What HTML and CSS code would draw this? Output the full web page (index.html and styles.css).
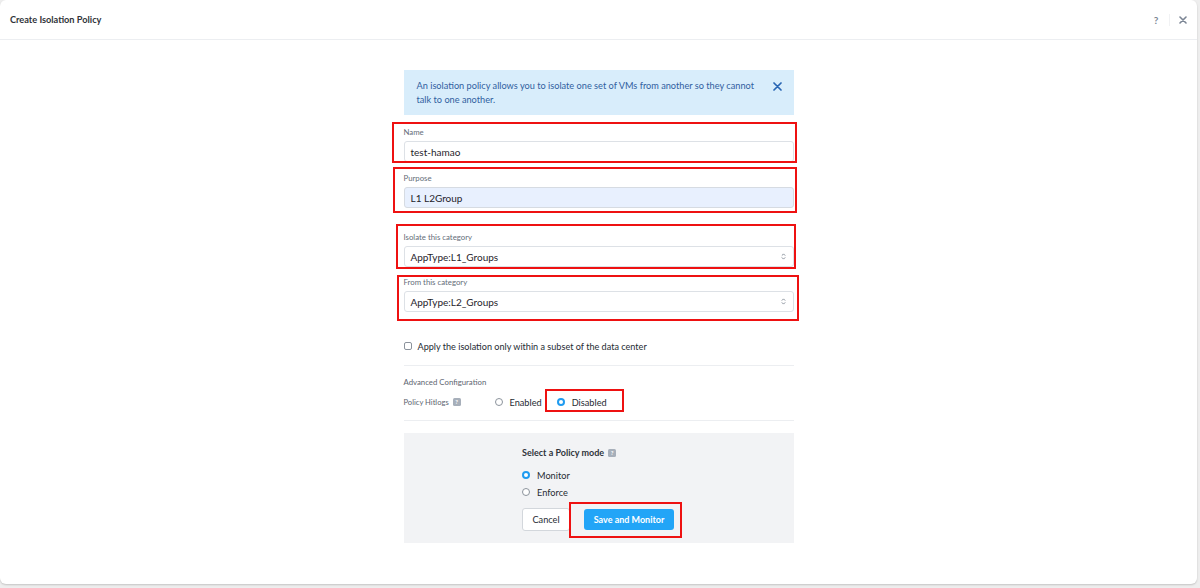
FILE: index.html
```html
<!DOCTYPE html>
<html lang="en">
<head>
<meta charset="utf-8">
<title>Create Isolation Policy</title>
<link rel="stylesheet" href="styles.css">
</head>
<body>
<div class="modal">
  <header class="modal-head">
    <h1 class="title">Create Isolation Policy</h1>
    <div class="head-actions">
      <span class="head-help">?</span>
      <span class="head-sep"></span>
      <svg class="head-close" width="8" height="8" viewBox="0 0 8 8"><path d="M1 1 L7 7 M7 1 L1 7" stroke="#7b8594" stroke-width="1.6" stroke-linecap="round"/></svg>
    </div>
  </header>
  <main class="modal-body">
    <div class="form">
      <div class="info">
        <p class="info-text">An isolation policy allows you to isolate one set of VMs from another so they cannot<br>talk to one another.</p>
        <svg class="info-close" width="9" height="9" viewBox="0 0 9 9"><path d="M1 1 L8 8 M8 1 L1 8" stroke="#2866b4" stroke-width="1.7" stroke-linecap="round"/></svg>
      </div>

      <div class="field f-name">
        <div class="label">Name</div>
        <div class="input">test-hamao</div>
      </div>
      <div class="field f-purpose">
        <div class="label">Purpose</div>
        <div class="input input-filled">L1 L2Group</div>
      </div>
      <div class="field f-isolate">
        <div class="label">Isolate this category</div>
        <div class="input select"><span>AppType:L1_Groups</span>
          <svg width="5" height="7" viewBox="0 0 5 7"><path d="M0.8 2.6 L2.5 0.9 L4.2 2.6 M0.8 4.4 L2.5 6.1 L4.2 4.4" fill="none" stroke="#8a929c" stroke-width="1"/></svg>
        </div>
      </div>
      <div class="field f-from">
        <div class="label">From this category</div>
        <div class="input select"><span>AppType:L2_Groups</span>
          <svg width="5" height="7" viewBox="0 0 5 7"><path d="M0.8 2.6 L2.5 0.9 L4.2 2.6 M0.8 4.4 L2.5 6.1 L4.2 4.4" fill="none" stroke="#8a929c" stroke-width="1"/></svg>
        </div>
      </div>

      <div class="check-row">
        <span class="checkbox"></span>
        <span class="check-text">Apply the isolation only within a subset of the data center</span>
      </div>
      <div class="divider d1"></div>

      <div class="adv-title">Advanced Configuration</div>
      <div class="hitlogs">
        <div class="hit-label">Policy Hitlogs <span class="help">?</span></div>
        <div class="radio-opt"><span class="radio"></span><span class="radio-text">Enabled</span></div>
        <div class="radio-opt opt-disabled"><span class="radio radio-on"></span><span class="radio-text">Disabled</span></div>
      </div>
      <div class="divider d2"></div>

      <div class="mode-box">
        <div class="mode-inner">
          <div class="mode-title">Select a Policy mode <span class="help">?</span></div>
          <div class="radio-opt mode-opt"><span class="radio radio-on"></span><span class="radio-text">Monitor</span></div>
          <div class="radio-opt mode-opt mode-opt2"><span class="radio"></span><span class="radio-text">Enforce</span></div>
          <div class="buttons">
            <button class="btn btn-cancel">Cancel</button>
            <button class="btn btn-primary">Save and Monitor</button>
          </div>
        </div>
      </div>
    </div>
  </main>

  <div class="mark mark-name"></div>
  <div class="mark mark-purpose"></div>
  <div class="mark mark-isolate"></div>
  <div class="mark mark-from"></div>
  <div class="mark mark-disabled"></div>
  <div class="mark mark-save"></div>
</div>
</body>
</html>
```

FILE: styles.css
```css
* { box-sizing: border-box; }

html, body {
  margin: 0;
  padding: 0;
  background: #eeeeee;
  width: 1200px;
  height: 588px;
  overflow: hidden;
  font-family: "Lato", "Open Sans", sans-serif;
  color: #262b33;
}

.modal {
  position: relative;
  width: 1197px;
  height: 584px;
  background: #ffffff;
  border-radius: 6px;
  box-shadow: 0 1px 2px rgba(0, 0, 0, 0.18);
}

.modal-head {
  height: 40px;
  border-bottom: 1px solid #eceef1;
  display: flex;
  align-items: center;
  justify-content: space-between;
  padding: 0 10px 0 10px;
}

.title {
  margin: 0;
  font-size: 9.2px;
  font-weight: 700;
  color: #2f3338;
}

.head-actions {
  display: flex;
  align-items: center;
}

.head-help {
  font-size: 10px;
  font-weight: 700;
  color: #7b8594;
  width: 10px;
  text-align: center;
}

.head-sep {
  width: 1px;
  height: 12px;
  background: #f1f2f4;
  margin: 0 9px 0 8px;
}

.head-close { display: block; }

.modal-body {
  padding-top: 30px;
}

.form {
  width: 390px;
  margin: 0 auto;
}

.info {
  height: 45px;
  background: #d8edfb;
  display: flex;
  align-items: flex-start;
  justify-content: space-between;
  padding: 9px 12px 0 13px;
}

.info-text {
  margin: 0;
  font-size: 9.2px;
  line-height: 14px;
  color: #30609f;
}

.info-close { margin-top: 3px; }

.field { display: flex; flex-direction: column; }

.label {
  font-size: 7.8px;
  line-height: 10px;
  color: #646d79;
  margin-bottom: 4px;
}

.input {
  height: 21px;
  border: 1px solid #dde1e6;
  border-radius: 3px;
  padding: 0 6px;
  display: flex;
  align-items: center;
  font-size: 10px;
  color: #1f242b;
}

.input-filled {
  background: #e8f0fe;
  border-color: #d6dbe2;
}

.select { justify-content: space-between; padding-right: 7px; }
.select svg { display: block; }

.f-name { margin-top: 12px; }
.f-purpose { margin-top: 11px; }
.f-isolate { margin-top: 24px; }
.f-from { margin-top: 10px; }

.check-row {
  margin-top: 27px;
  height: 14px;
  display: flex;
  align-items: center;
}

.checkbox {
  width: 8px;
  height: 8px;
  border: 1px solid #8c939c;
  border-radius: 2px;
  margin-right: 6px;
  background: #fff;
}

.check-text {
  font-size: 9.1px;
  color: #262b33;
}

.divider {
  height: 1px;
  background: #eceef1;
}
.d1 { margin-top: 12px; }
.d2 { margin-top: 11px; }

.adv-title {
  margin-top: 11px;
  font-size: 7.8px;
  line-height: 10px;
  color: #5d6570;
}

.hitlogs {
  margin-top: 8px;
  height: 14px;
  display: flex;
  align-items: center;
}

.hit-label {
  width: 91px;
  font-size: 7.6px;
  color: #5d6570;
  display: flex;
  align-items: center;
}
.hit-label .help { margin-left: 4px; }

.help {
  display: inline-flex;
  align-items: center;
  justify-content: center;
  width: 8px;
  height: 8px;
  border-radius: 1.5px;
  background: #a7afba;
  color: #ffffff;
  font-size: 6px;
  font-weight: 700;
  line-height: 1;
}

.radio-opt {
  display: flex;
  align-items: center;
}

.radio {
  width: 8px;
  height: 8px;
  border-radius: 50%;
  border: 1px solid #8c939c;
  background: #fff;
  margin-right: 7px;
}

.radio-on {
  border: 2.5px solid #1f9bf0;
  background: #ffffff;
}

.radio-text {
  font-size: 9.2px;
  color: #262b33;
}

.opt-disabled { margin-left: 15px; }

.mode-box {
  margin-top: 12px;
  height: 110px;
  background: #f2f3f5;
  padding-top: 15px;
}

.mode-inner {
  width: 153px;
  margin: 0 auto;
}

.mode-title {
  font-size: 9px;
  line-height: 10px;
  font-weight: 700;
  color: #2f343b;
  display: flex;
  align-items: center;
}
.mode-title .help { margin-left: 4px; }

.mode-opt { margin-top: 11px; height: 12px; }
.mode-opt2 { margin-top: 5px; }

.buttons {
  margin-top: 10px;
  display: flex;
  align-items: center;
  gap: 14px;
}

.btn {
  font-family: "Lato", "Open Sans", sans-serif;
  border-radius: 3px;
  cursor: pointer;
}

.btn-cancel {
  width: 48px;
  height: 23px;
  background: #ffffff;
  border: 1px solid #d3d7dc;
  font-size: 9.2px;
  color: #262b33;
  padding: 0;
}

.btn-primary {
  width: 90px;
  height: 21px;
  background: #22a5f7;
  border: none;
  color: #ffffff;
  font-size: 9px;
  font-weight: 700;
  padding: 0;
}

/* red annotation boxes drawn over the screenshot */
.mark {
  position: absolute;
  border: 2px solid #ee1111;
  pointer-events: none;
}
.mark-name { left: 392px; top: 122px; width: 405px; height: 41px; }
.mark-purpose { left: 393px; top: 167px; width: 404px; height: 46px; }
.mark-isolate { left: 396px; top: 224px; width: 400px; height: 45px; }
.mark-from { left: 397px; top: 275px; width: 402px; height: 46px; }
.mark-disabled { left: 545px; top: 389px; width: 79px; height: 23px; }
.mark-save { left: 569px; top: 502px; width: 113px; height: 36px; }
```
